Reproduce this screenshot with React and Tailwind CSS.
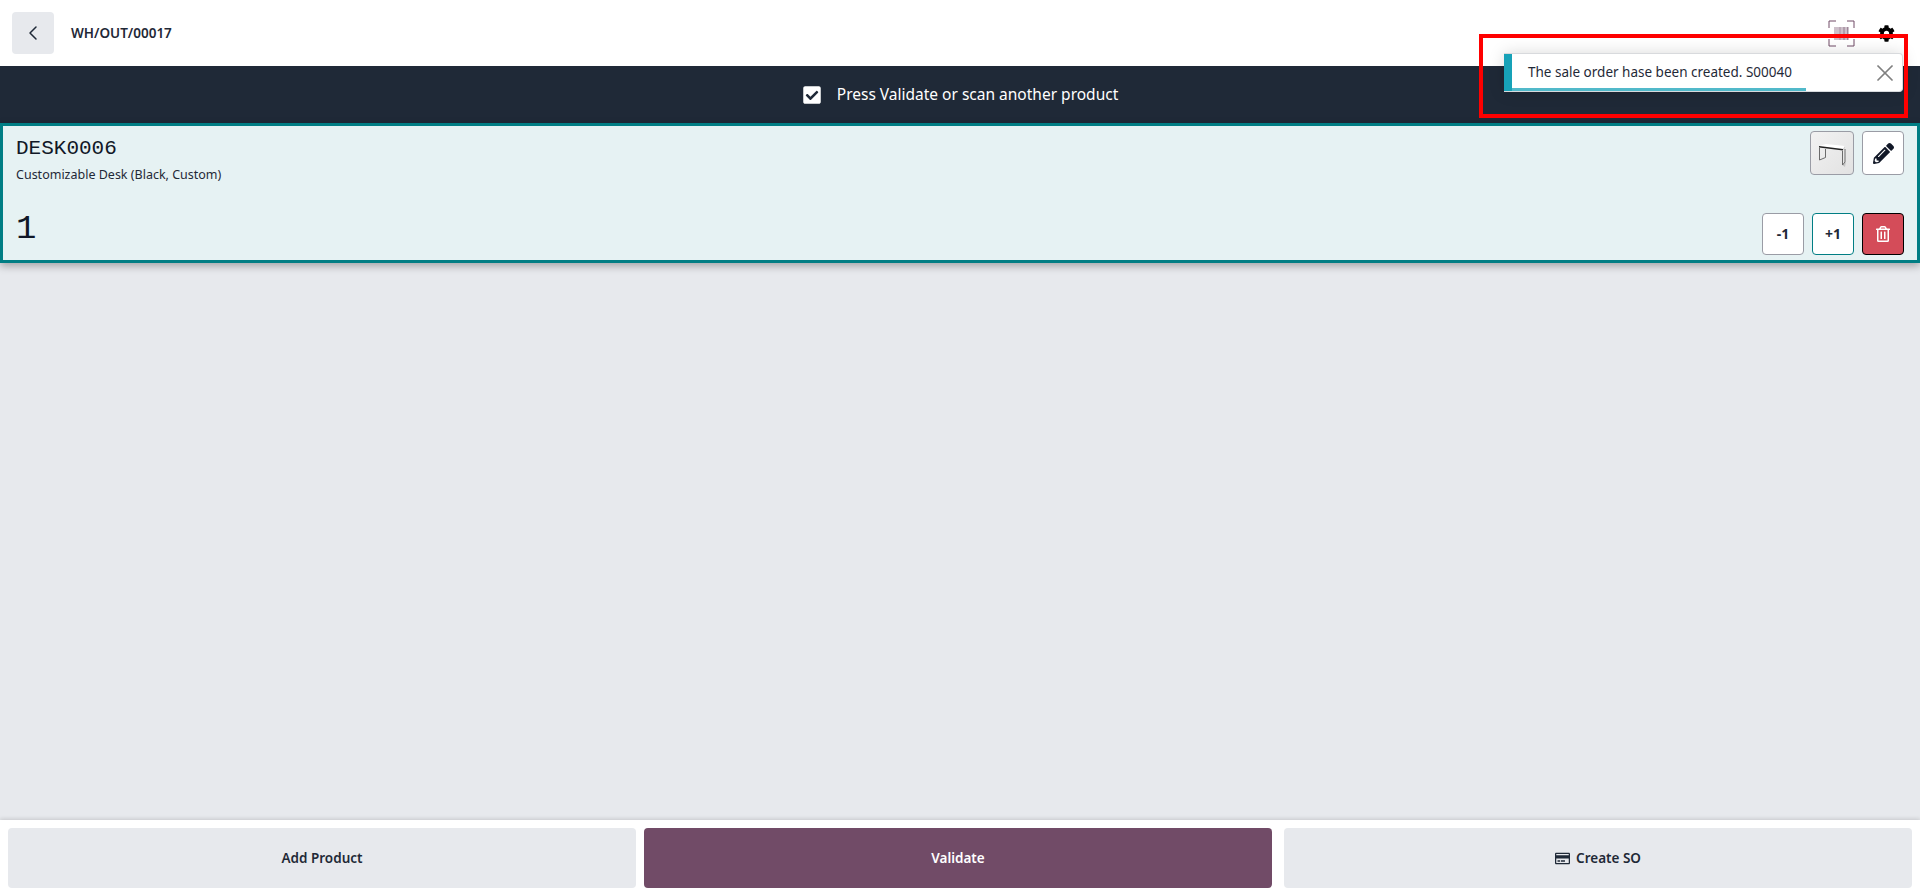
import React from "react";
import { ChevronLeft, X } from "lucide-react";
import { FaCog, FaPencilAlt, FaCheckSquare, FaRegCreditCard, FaRegTrashAlt } from "react-icons/fa";

const uiFont = "font-['Noto_Sans',sans-serif]";

function Barcode() {
  return (
    <svg width="27" height="27" viewBox="0 0 27 27" fill="none">
      <path d="M1 8V1h7M19 1h7v7M26 19v7h-7M8 26H1v-7" stroke="#714b67" strokeWidth="1" />
      <g fill="#714b67">
        <rect x="6" y="7" width="15" height="13" opacity="0.35" />
        <rect x="11" y="7" width="2" height="13" opacity="0.2" />
        <rect x="15" y="7" width="2" height="13" opacity="0.3" />
        <rect x="19" y="7" width="1" height="13" opacity="0.5" />
      </g>
    </svg>
  );
}

function DeskPicture() {
  return (
    <svg width="28" height="24" viewBox="0 0 28 24" fill="none" className="mt-1">
      <path d="M24 22l4-3-1 5z" fill="#c4c4c4" />
      <path d="M1 3l7-2 19 2-2 3z" fill="#ffffff" />
      <path d="M1 3l24 3v1.5L1 4.5z" fill="#222222" />
      <path d="M27 3v2l-2 2.5V6z" fill="#d0d0d0" />
      <path d="M1.5 5v12l6-2.5V6M24.5 8v14M27 6v13l-2.5 3" stroke="#6b6b6b" strokeWidth="1" />
    </svg>
  );
}

function SmallButton({ className = "", children }) {
  return (
    <button className={`flex items-center justify-center rounded border ${className}`}>
      {children}
    </button>
  );
}

function FooterButton({ className = "", children }) {
  return (
    <button className={`flex h-[60px] flex-1 items-center justify-center gap-1.5 rounded text-[13.5px] font-semibold ${className}`}>
      {children}
    </button>
  );
}

export default function App() {
  return (
    <div className={`${uiFont} relative flex h-[896px] w-full flex-col overflow-hidden bg-[#e7e9ed] text-[#1f2937]`}>
      {/* Top bar */}
      <header className="flex h-[66px] items-center bg-white pl-3 pr-[25px]">
        <button className="flex h-[42px] w-[42px] items-center justify-center rounded bg-[#e7e9ed]">
          <ChevronLeft size={24} strokeWidth={1.5} />
        </button>
        <span className="ml-[17px] text-[13.5px] font-semibold">WH/OUT/00017</span>
        <div className="ml-auto flex items-center gap-[23px]">
          <Barcode />
          <FaCog size={17} className="text-black" />
        </div>
      </header>

      {/* Status bar */}
      <div className="flex h-[57px] items-center justify-center gap-[15px] bg-[#1f2937] text-white">
        <FaCheckSquare size={20} />
        <span className="text-[15.5px]">Press Validate or scan another product</span>
      </div>

      {/* Product line */}
      <div className="mb-auto flex h-[140px] flex-col border-[3px] border-[#017e84] bg-[#e6f2f3] px-[13px] pt-[5px] pb-[5px] shadow-[0_3px_8px_rgba(0,0,0,0.3)]">
        <div className="flex justify-between">
          <div>
            <div className="mt-[6px] font-['Liberation_Mono',monospace] text-[21px] leading-6 text-[#111827]">DESK0006</div>
            <div className="mt-[6px] text-[12.5px] leading-4">Customizable Desk (Black, Custom)</div>
          </div>
          <div className="flex gap-2">
            <SmallButton className="h-[44px] w-[44px] border-[#9a9ca5] bg-gradient-to-br from-[#f2f2f2] to-[#e2e2e2]">
              <DeskPicture />
            </SmallButton>
            <SmallButton className="h-[44px] w-[42px] border-[#9a9ca5] bg-white">
              <FaPencilAlt size={21} className="text-[#111827]" />
            </SmallButton>
          </div>
        </div>
        <div className="mt-auto flex items-end justify-between">
          <span className="mb-[6px] font-['Liberation_Mono',monospace] text-[34px] leading-10 text-[#111827]">1</span>
          <div className="flex gap-2">
            <SmallButton className="h-[42px] w-[42px] border-[#9a9ca5] bg-white text-sm font-bold">-1</SmallButton>
            <SmallButton className="h-[42px] w-[42px] border-[#017e84] bg-white text-sm font-bold">+1</SmallButton>
            <SmallButton className="h-[42px] w-[42px] border-black bg-[#d44c59] text-white">
              <FaRegTrashAlt size={16} />
            </SmallButton>
          </div>
        </div>
      </div>

      {/* Footer */}
      <footer className="flex h-[76px] items-start gap-2 bg-white px-2 pt-2 shadow-[0_-1px_4px_rgba(0,0,0,0.15)]">
        <FooterButton className="bg-[#e7e9ed]">Add Product</FooterButton>
        <FooterButton className="bg-[#714b67] text-white">Validate</FooterButton>
        <FooterButton className="ml-[4px] bg-[#e7e9ed]">
          <FaRegCreditCard size={15} />
          Create SO
        </FooterButton>
      </footer>

      {/* Notification */}
      <div className="absolute top-[53px] left-[1504px] flex h-[39px] w-[399px] items-center overflow-hidden rounded-r border border-l-0 border-[#d8dadd] bg-white text-[13.5px] shadow-[0_0_16px_rgba(0,0,0,0.15)]">
        <div className="h-full w-2 bg-[#17a2b8]" />
        <span className="ml-4">The sale order hase been created. S00040</span>
        <X size={28} strokeWidth={1.5} className="absolute right-[3px] text-[#808080]" />
        <div className="absolute bottom-0 left-2 h-[3px] w-[294px] bg-[#17a2b8]/75" />
      </div>

      {/* Annotation */}
      <div className="absolute top-[34px] left-[1479px] h-[84px] w-[429px] border-4 border-[#ff0000]" />
    </div>
  );
}
